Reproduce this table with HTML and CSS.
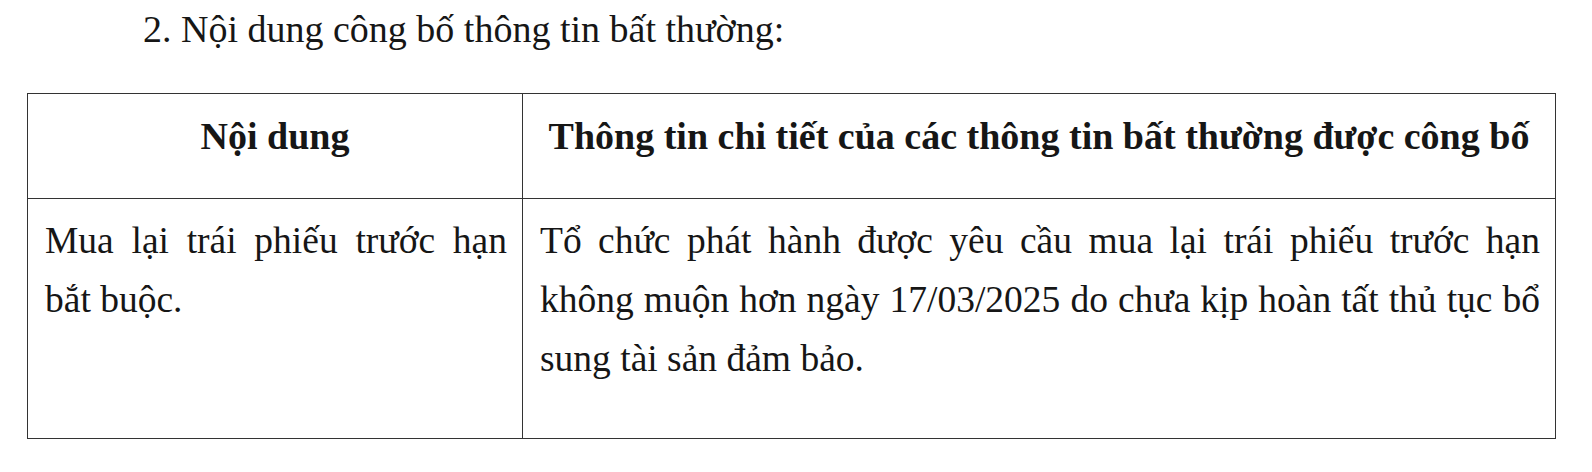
FILE: index.html
```html
<!DOCTYPE html>
<html lang="vi">
<head>
<meta charset="utf-8">
<title>Nội dung công bố thông tin bất thường</title>
<link rel="stylesheet" href="styles.css">
</head>
<body>
<div class="page">
  <p class="title">2. Nội dung công bố thông tin bất thường:</p>
  <table class="info">
    <colgroup>
      <col class="col-a">
      <col class="col-b">
    </colgroup>
    <thead>
      <tr>
        <th class="head">Nội dung</th>
        <th class="head">Thông tin chi tiết của các thông tin bất thường được công bố</th>
      </tr>
    </thead>
    <tbody>
      <tr>
        <td class="cell">Mua lại trái phiếu trước hạn bắt buộc.</td>
        <td class="cell">Tổ chức phát hành được yêu cầu mua lại trái phiếu trước hạn không muộn hơn ngày 17/03/2025 do chưa kịp hoàn tất thủ tục bổ sung tài sản đảm bảo.</td>
      </tr>
    </tbody>
  </table>
</div>
</body>
</html>
```

FILE: styles.css
```css
html, body {
  margin: 0;
  padding: 0;
  background: #ffffff;
}

.page {
  font-family: "Liberation Serif", "Times New Roman", serif;
  font-size: 38px;
  line-height: 59px;
  color: #161616;
  padding: 0 0 0 27px;
}

.title {
  margin: 0 0 34px 116px;
}

.info {
  border-collapse: collapse;
  table-layout: fixed;
  width: 1529px;
}

.col-a {
  width: 495px;
}

.info th,
.info td {
  border: 1.5px solid #333333;
}

.head {
  font-weight: bold;
  text-align: center;
  vertical-align: top;
  padding: 13px 8px 32px;
}

.cell {
  font-size: 37.5px;
  text-align: justify;
  vertical-align: top;
  padding: 12px 15px 50px 17px;
}
```
